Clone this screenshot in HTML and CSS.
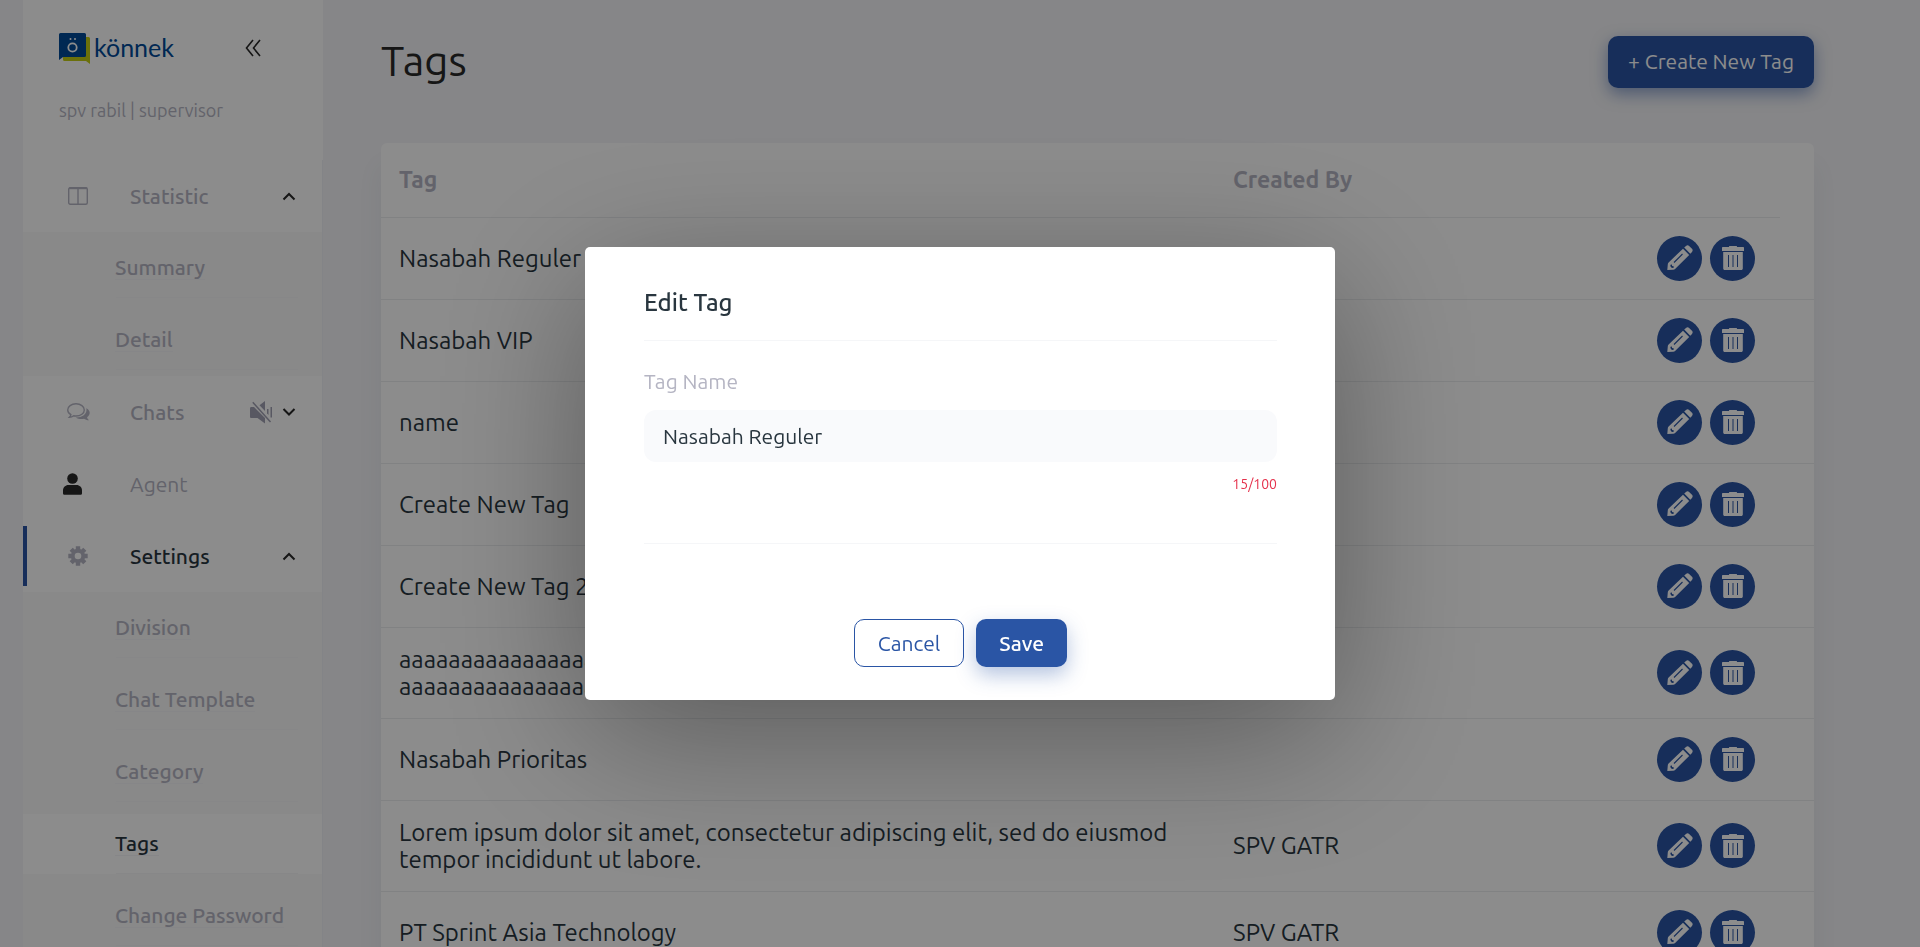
FILE: index.html
```html
<!DOCTYPE html>
<html lang="en">
<head>
<meta charset="utf-8">
<title>Tags</title>
<link rel="stylesheet" href="styles.css">
</head>
<body>
<svg width="0" height="0" class="sprite" aria-hidden="true">
  <symbol id="pencil" viewBox="0 0 26 26">
    <path fill="currentColor" d="M17.2 2.6 19 .9c.9-.9 2.2-.9 3.1 0l2.9 2.9c.9.9.9 2.200 0 3.100L23.300 8.700z"/>
    <path fill="currentColor" fill-rule="evenodd" d="M16 3.700 22.200 9.900 8.100 23.900c-.6.500-1 .7-1.800.8L.3 25l.5-5.800c.1-.8.300-1.300.8-1.800zM15.100 8.600 6.600 17.100l.8.800 8.500-8.500zM3.500 19.800c-.5 1.500.8 3.700 3 3.100l.2-1.700-1.600-.2-.2-1.400z"/>
  </symbol>
  <symbol id="trash" viewBox="0 0 22 24">
    <path fill="currentColor" d="M1 1h6V.5C7 .2 7.200 0 7.500 0h7c.3 0 .5.200.5.500V1h6c.6 0 1 .4 1 1v3H0V2c0-.6.4-1 1-1z"/>
    <path fill="currentColor" fill-rule="evenodd" d="M1.200 6h19.600v16.500c0 .8-.7 1.500-1.500 1.500H2.700c-.8 0-1.500-.7-1.500-1.500zM6 9v12h1V9zm4.500 0v12h1V9zM15 9v12h1V9z"/>
  </symbol>
</svg>

<div class="page">
  <aside class="sidebar">
    <div class="brand">
      <svg class="brand-mark" viewBox="0 0 32 31" aria-hidden="true">
        <path fill="#c4cc14" d="M26 4h3.500A1.500 1.500 0 0 1 31 5.500V31l-4-3H5.500A1.500 1.500 0 0 1 4 26.500V22h22z"/>
        <path fill="#004a98" d="M1.500 0h24A1.500 1.500 0 0 1 27 1.500v21a1.500 1.500 0 0 1-1.500 1.500H4L0 27V1.500A1.500 1.500 0 0 1 1.500 0z"/>
        <circle cx="13.500" cy="14.500" r="4.200" fill="none" stroke="#fff" stroke-width="1.800"/>
        <circle cx="11.500" cy="6" r="1" fill="#fff"/><circle cx="16" cy="6" r="1" fill="#fff"/>
      </svg>
      <span class="brand-name">könnek</span>
      <button class="collapse" aria-label="Collapse menu">
        <svg viewBox="0 0 16 18" width="16" height="18" fill="none" stroke="currentColor" stroke-width="1.600"><path d="M8 1 1.500 9 8 17M15 1 8.500 9 15 17"/></svg>
      </button>
    </div>
    <p class="account">spv rabil | supervisor</p>
    <nav class="menu">
      <a class="item" href="#">
        <svg class="item-icon" viewBox="0 0 20 18" width="20" height="18" fill="none" stroke="currentColor"><rect x=".7" y=".7" width="18.600" height="16.600" rx="1.500" stroke-width="1.400"/><path stroke-width="1.800" d="M1 1.300h18"/><path stroke-width="1.400" d="M10 1v16"/></svg>
        <span class="item-label">Statistic</span>
        <svg class="chevron" viewBox="0 0 14 9"><path d="M1.500 7.500 7 2l5.500 5.500"/></svg>
      </a>
      <div class="submenu">
        <a class="sub" href="#"><span>Summary</span></a>
        <a class="sub" href="#"><span>Detail</span></a>
      </div>
      <a class="item" href="#">
        <svg class="item-icon" viewBox="0 0 23 18" width="23" height="18"><path fill="none" stroke="currentColor" stroke-width="1.400" d="M9 .8c4.700 0 8.300 2.700 8.300 6.100S13.700 13 9 13c-.8 0-1.600-.1-2.300-.2-1.100.8-2.400 1.400-4.300 1.500.8-.8 1.300-1.600 1.500-2.700C2 10.500.7 8.800.7 6.900.7 3.500 4.300.8 9 .8z"/><path fill="currentColor" d="M19.200 5.200c2.200 1 3.500 2.700 3.500 4.600 0 1.800-1 3.300-2.600 4.400.3 1.300.9 2.100 1.900 3.100-2.200 0-3.700-.6-5-1.500-2.900.6-6.100.1-8.300-1.400 5.800.2 10.800-2.900 10.800-7.500 0-.6-.1-1.100-.3-1.700z"/></svg>
        <span class="item-label">Chats</span>
        <svg class="mute" viewBox="0 0 23 23" width="23" height="23"><path fill="currentColor" d="M0 7.500C0 6.700.5 6 1.300 6H4l11 11v5.500L7.500 17H1.300C.5 17 0 16.500 0 15.700zM9.500 4.200 15 0v10zM17 8h1.500v6l-1.500-1.500zM20.500 6H22v10.500h-1.500z"/><path fill="none" stroke="#fff" stroke-width="1" d="M4 .8 21.500 20.300"/><path fill="none" stroke="currentColor" stroke-width="1.500" d="M2.800 1.300 20.500 21"/></svg>
        <svg class="chevron" viewBox="0 0 14 9"><path d="M1.500 1 7 6.500 12.500 1"/></svg>
      </a>
      <a class="item item-plain" href="#">
        <svg class="item-icon person" viewBox="0 0 19 22" width="19" height="22" fill="#282828"><circle cx="9.500" cy="5.500" r="5.300"/><path d="M5.300 12h8.400c2.700 0 5.300 2.400 5.300 5.300v2.900c0 .9-.8 1.600-1.600 1.600H1.600c-.8 0-1.600-.7-1.600-1.600v-2.900C0 14.400 2.600 12 5.300 12z"/></svg>
        <span class="item-label">Agent</span>
      </a>
      <a class="item item-active" href="#" aria-current="true">
        <svg class="item-icon" viewBox="0 0 20 20" width="20" height="20"><g stroke="currentColor" stroke-width="4.400"><path d="M10 .3v19.400M.3 10h19.400M3.200 3.200l13.600 13.600M16.800 3.200 3.200 16.800"/></g><circle cx="10" cy="10" r="7.200" fill="currentColor"/><circle cx="10" cy="10" r="3.300" fill="#fff"/></svg>
        <span class="item-label">Settings</span>
        <svg class="chevron" viewBox="0 0 14 9"><path d="M1.500 7.500 7 2l5.500 5.500"/></svg>
      </a>
      <div class="submenu">
        <a class="sub" href="#"><span>Division</span></a>
        <a class="sub" href="#"><span>Chat Template</span></a>
        <a class="sub" href="#"><span>Category</span></a>
        <a class="sub sub-active" href="#"><span>Tags</span></a>
        <a class="sub" href="#"><span>Change Password</span></a>
      </div>
    </nav>
  </aside>

  <main class="content">
    <header class="content-head">
      <h1>Tags</h1>
      <button class="btn btn-create">+ Create New Tag</button>
    </header>
    <div class="card">
      <table class="tags">
        <colgroup><col class="c-tag"><col class="c-by"><col class="c-act"><col class="c-end"></colgroup>
        <thead><tr><th>Tag</th><th>Created By</th><th></th></tr></thead>
        <tbody>
          <tr><td>Nasabah Reguler</td><td></td><td colspan="2"><div class="actions"><button aria-label="Edit"><svg class="i-pencil"><use href="#pencil"/></svg></button><button aria-label="Delete"><svg class="i-trash"><use href="#trash"/></svg></button></div></td></tr>
          <tr><td>Nasabah VIP</td><td></td><td colspan="2"><div class="actions"><button aria-label="Edit"><svg class="i-pencil"><use href="#pencil"/></svg></button><button aria-label="Delete"><svg class="i-trash"><use href="#trash"/></svg></button></div></td></tr>
          <tr><td>name</td><td></td><td colspan="2"><div class="actions"><button aria-label="Edit"><svg class="i-pencil"><use href="#pencil"/></svg></button><button aria-label="Delete"><svg class="i-trash"><use href="#trash"/></svg></button></div></td></tr>
          <tr><td>Create New Tag</td><td></td><td colspan="2"><div class="actions"><button aria-label="Edit"><svg class="i-pencil"><use href="#pencil"/></svg></button><button aria-label="Delete"><svg class="i-trash"><use href="#trash"/></svg></button></div></td></tr>
          <tr><td>Create New Tag 2</td><td></td><td colspan="2"><div class="actions"><button aria-label="Edit"><svg class="i-pencil"><use href="#pencil"/></svg></button><button aria-label="Delete"><svg class="i-trash"><use href="#trash"/></svg></button></div></td></tr>
          <tr><td>aaaaaaaaaaaaaaaaaaaaaaaaaaaaaaaaaaaaaaaaaaaaaaaaaaaaaaaaaaaaaaaaaaaaaaaaaaaaaaaaaaaaaaaaaaaa</td><td></td><td colspan="2"><div class="actions"><button aria-label="Edit"><svg class="i-pencil"><use href="#pencil"/></svg></button><button aria-label="Delete"><svg class="i-trash"><use href="#trash"/></svg></button></div></td></tr>
          <tr><td>Nasabah Prioritas</td><td></td><td colspan="2"><div class="actions"><button aria-label="Edit"><svg class="i-pencil"><use href="#pencil"/></svg></button><button aria-label="Delete"><svg class="i-trash"><use href="#trash"/></svg></button></div></td></tr>
          <tr><td>Lorem ipsum dolor sit amet, consectetur adipiscing elit, sed do eiusmod tempor incididunt ut labore.</td><td>SPV GATR</td><td colspan="2"><div class="actions"><button aria-label="Edit"><svg class="i-pencil"><use href="#pencil"/></svg></button><button aria-label="Delete"><svg class="i-trash"><use href="#trash"/></svg></button></div></td></tr>
          <tr><td>PT Sprint Asia Technology</td><td>SPV GATR</td><td colspan="2"><div class="actions"><button aria-label="Edit"><svg class="i-pencil"><use href="#pencil"/></svg></button><button aria-label="Delete"><svg class="i-trash"><use href="#trash"/></svg></button></div></td></tr>
        </tbody>
      </table>
    </div>
  </main>
</div>

<div class="backdrop">
  <form class="modal" role="dialog" aria-modal="true" aria-labelledby="modal-title">
    <h2 id="modal-title">Edit Tag</h2>
    <div class="modal-body">
      <label for="tag-name">Tag Name</label>
      <input id="tag-name" type="text" maxlength="100" value="Nasabah Reguler">
      <div class="count">15/100</div>
    </div>
    <div class="modal-actions">
      <button type="button" class="btn btn-cancel">Cancel</button>
      <button type="submit" class="btn btn-save">Save</button>
    </div>
  </form>
</div>
</body>
</html>
```
FILE: styles.css
```css
* { box-sizing: border-box; }

body {
  margin: 0;
  height: 100vh;
  overflow: hidden;
  background: #f4f4f7;
  color: #282828;
  font-family: Ubuntu, "Noto Sans", sans-serif;
}

a { text-decoration: none; }
button, input { font-family: inherit; }
button { cursor: pointer; }

.sprite { position: absolute; }

.page {
  display: flex;
  min-height: 100vh;
  padding-left: 23px;
}

/* Sidebar */
.sidebar {
  flex: 0 0 300px;
  background: #fff;
}

.brand {
  display: flex;
  align-items: center;
  height: 64px;
  padding: 32px 62px 0 36px;
}
.brand-mark { width: 32px; height: 31px; }
.brand-name {
  margin-left: 3px;
  padding-bottom: 3px;
  color: #004a98;
  font-family: Lato, sans-serif;
  font-size: 25px;
  line-height: 28px;
}
.collapse {
  display: flex;
  margin-left: auto;
  padding: 0;
  border: 0;
  background: none;
  color: #282828;
}

.account {
  margin: 32px 0 0;
  padding-left: 36px;
  color: #b5b5c3;
  font-size: 18px;
  line-height: 28px;
}

.menu {
  margin-top: 36px;
  padding-top: 6px;
  border-right: 1px solid #eff0f6;
}

.item {
  display: grid;
  grid-template-columns: 22px 41px 1fr auto auto;
  align-items: center;
  height: 60px;
  margin-bottom: 12px;
  padding: 0 26px 0 40px;
  border-left: 4px solid transparent;
  color: #b5b5c3;
  font-size: 21px;
  font-weight: 500;
}
.item:has(+ .submenu) { margin-bottom: 6px; }
.submenu + .item { margin-top: 6px; }
.item-plain { font-weight: 400; }
.item-active { border-left-color: #2a55a5; }
.item-active .item-label { color: #29363f; }
.item-icon { grid-column: 1; justify-self: center; }
.person { justify-self: start; margin-left: -4px; }
.item-label { grid-column: 3; }
.mute { grid-column: 4; margin-right: 9px; color: #a1a1b3; }
.chevron {
  grid-column: 5;
  width: 14px;
  height: 9px;
  fill: none;
  stroke: #282828;
  stroke-width: 2;
}

.submenu {
  padding: 6px 0;
  background: #f9f9f9;
}
.sub {
  display: flex;
  align-items: center;
  height: 60px;
  margin-bottom: 12px;
  padding: 0 23px 2px 92px;
  background: linear-gradient(#f6f6f8, #f6f6f8) 93px 100% / 182px 1px no-repeat;
  color: #b5b5c3;
  font-size: 21px;
  font-weight: 500;
  line-height: 24px;
}
.sub:last-child { margin-bottom: 0; }
.sub span { border-bottom: 1px solid #f5f5f7; }
.sub-active { background-color: #fff; color: #29363f; }

/* Content */
.content {
  flex: 1;
  min-width: 0;
  padding: 36px 106px 0 58px;
}
.content-head {
  display: flex;
  justify-content: space-between;
  align-items: center;
  height: 52px;
  margin-bottom: 55px;
}
.content-head h1 {
  margin: 0;
  padding-bottom: 2px;
  font-size: 42px;
  font-weight: 400;
  line-height: 50px;
}

.btn {
  padding: 0 20px;
  border: 0;
  border-radius: 10px;
  background: #2a55a5;
  color: #fff;
  font-size: 21px;
  font-weight: 400;
}
.btn-create {
  height: 52px;
  padding-bottom: 2px;
  box-shadow: 0 6px 16px rgba(42, 85, 165, .5);
}

.card {
  border-radius: 6px;
  background: #fff;
  box-shadow: 0 24px 24px rgba(60, 100, 150, .08);
}
.tags {
  width: 100%;
  border-collapse: collapse;
  table-layout: fixed;
  color: #29363f;
  font-size: 24px;
  line-height: 27px;
}
.c-by { width: 27%; }
.c-act { width: 178px; }
.c-end { width: 34px; }
.tags th {
  height: 74px;
  padding: 0 18px;
  border-bottom: 1px solid #ebedef;
  color: #b5b5c3;
  font-size: 23px;
  font-weight: 700;
  text-align: left;
}
.tags td {
  height: 82px;
  padding: 18px;
  border-bottom: 1px solid #ebedef;
  overflow-wrap: anywhere;
}
.actions {
  display: flex;
  justify-content: flex-end;
  gap: 8px;
  padding-right: 41px;
}
.actions button {
  display: grid;
  place-items: center;
  flex: none;
  width: 45px;
  height: 45px;
  padding: 0;
  border: 0;
  border-radius: 50%;
  background: #2a55a5;
  color: #fff;
}
.i-pencil { width: 26px; height: 26px; }
.i-trash { width: 22px; height: 24px; }

/* Dialog */
.backdrop {
  position: fixed;
  inset: 0;
  display: grid;
  place-items: center;
  background: rgba(0, 0, 0, .45);
}
.modal {
  width: 750px;
  padding: 35px 58px 33px 59px;
  border-radius: 5px;
  background: #fff;
  box-shadow: 0 36px 150px rgba(0, 0, 0, .36);
}
.modal h2 {
  margin: 0;
  padding: 4px 0 20px;
  border-bottom: 1px solid #f5f6f8;
  color: #29363f;
  font-size: 24px;
  font-weight: 500;
  line-height: 34px;
}
.modal-body {
  padding-bottom: 50px;
  border-bottom: 1px solid #f5f6f8;
}
.modal-body label {
  display: block;
  padding: 25px 0 14px;
  color: #b5b5c3;
  font-size: 21px;
  line-height: 30px;
}
.modal-body input {
  display: block;
  width: 100%;
  height: 52px;
  padding: 0 19px;
  border: 0;
  border-radius: 12px;
  background: #f9fafc;
  color: #29363f;
  font-size: 21px;
  outline: none;
}
.count {
  margin-top: 13px;
  color: #e5304b;
  font-size: 14px;
  line-height: 18px;
  text-align: right;
}
.modal-actions {
  display: flex;
  justify-content: center;
  gap: 12px;
  padding-top: 75px;
}
.modal-actions .btn { height: 48px; padding: 0 23px; }
.modal-actions .btn-cancel {
  border: 1px solid #2a55a5;
  background: #fff;
  color: #2a55a5;
}
.modal-actions .btn-save {
  font-weight: 500;
  box-shadow: 0 8px 20px rgba(42, 85, 165, .35);
}
```
